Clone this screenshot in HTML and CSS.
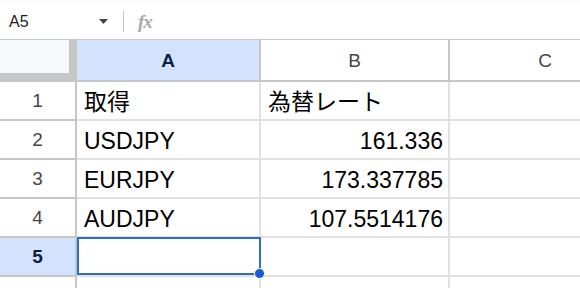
FILE: index.html
```html
<!DOCTYPE html>
<html lang="ja">
<head>
<meta charset="utf-8">
<link rel="stylesheet" href="styles.css">
</head>
<body>
<div class="app">
  <div class="topstrip"></div>
  <div class="formulabar">
    <div class="namebox">
      <span class="nametext">A5</span>
      <svg class="caret" width="9" height="5" viewBox="0 0 9 5"><path d="M0 0 H9 L4.5 5 Z" fill="#444746"/></svg>
    </div>
    <div class="sep"></div>
    <span class="fx">fx</span>
  </div>
  <div class="grid">
    <div class="corner"></div>
    <div class="colhdr active">A</div>
    <div class="colhdr">B</div>
    <div class="colhdr last">C</div>

    <div class="rowhdr">1</div>
    <div class="cell">取得</div>
    <div class="cell">為替レート</div>
    <div class="cell last"></div>

    <div class="rowhdr">2</div>
    <div class="cell">USDJPY</div>
    <div class="cell num">161.336</div>
    <div class="cell last"></div>

    <div class="rowhdr">3</div>
    <div class="cell">EURJPY</div>
    <div class="cell num">173.337785</div>
    <div class="cell last"></div>

    <div class="rowhdr">4</div>
    <div class="cell">AUDJPY</div>
    <div class="cell num">107.5514176</div>
    <div class="cell last"></div>

    <div class="rowhdr active">5</div>
    <div class="cell selected"><div class="selbox"></div><div class="handle"></div></div>
    <div class="cell"></div>
    <div class="cell last"></div>

    <div class="rowhdr">6</div>
    <div class="cell"></div>
    <div class="cell"></div>
    <div class="cell last"></div>
  </div>
</div>
</body>
</html>
```

FILE: styles.css
```css
html, body {
  margin: 0;
  padding: 0;
  background: #ffffff;
  overflow: hidden;
}
.app {
  width: 580px;
  height: 288px;
  overflow: hidden;
  font-family: "Liberation Sans", Arial, "Noto Sans CJK JP", sans-serif;
}
.topstrip {
  height: 4px;
  background: #f9fbfd;
}
.formulabar {
  height: 35px;
  display: flex;
  align-items: center;
  background: #ffffff;
  border-bottom: 1px solid #c7c7c7;
}
.namebox {
  width: 112px;
  display: flex;
  align-items: center;
  justify-content: space-between;
  padding-left: 9px;
  box-sizing: border-box;
  padding-right: 4px;
}
.nametext {
  font-family: "Liberation Sans", Arial, sans-serif;
  font-size: 16px;
  color: #1f1f1f;
}
.caret {
  display: block;
}
.sep {
  width: 1px;
  height: 21px;
  background: #c7c7c7;
  margin-left: 11px;
}
.fx {
  margin-left: 14px;
  font-family: "Liberation Serif", serif;
  font-style: italic;
  font-weight: bold;
  font-size: 19px;
  color: #a8a8a8;
  letter-spacing: -1px;
}
.grid {
  display: grid;
  width: 640px;
  grid-template-columns: 77px 184px 189px 190px;
  grid-template-rows: 42px repeat(6, 39px);
}
.corner {
  background: #f8f9fa;
  box-sizing: border-box;
  border-right: 8px solid #c4c7c5;
  border-bottom: 9px solid #c4c7c5;
}
.colhdr {
  box-sizing: border-box;
  background: #ffffff;
  border-right: 2px solid #c4c7c5;
  border-bottom: 2px solid #c4c7c5;
  display: flex;
  align-items: center;
  justify-content: center;
  font-family: "Liberation Sans", Arial, sans-serif;
  font-size: 19px;
  color: #444746;
  padding-top: 2px;
}
.colhdr.active {
  background: #d3e3fd;
  color: #0b1f45;
  font-weight: bold;
}
.colhdr.last, .cell.last {
  border-right: none;
}
.rowhdr {
  box-sizing: border-box;
  background: #ffffff;
  border-right: 2px solid #c4c7c5;
  border-bottom: 2px solid #c4c7c5;
  display: flex;
  align-items: center;
  justify-content: center;
  font-family: "Liberation Sans", Arial, sans-serif;
  font-size: 19px;
  color: #444746;
}
.rowhdr.active {
  background: #d3e3fd;
  color: #0b1f45;
  font-weight: bold;
}
.cell {
  box-sizing: border-box;
  border-right: 2px solid #e1e1e1;
  border-bottom: 2px solid #e1e1e1;
  display: flex;
  align-items: flex-end;
  padding: 0 6px 4px 7px;
  font-size: 23px;
  line-height: 26px;
  color: #000000;
  white-space: nowrap;
}
.cell.num {
  justify-content: flex-end;
  padding-right: 5px;
}
.cell.selected {
  position: relative;
}
.selbox {
  position: absolute;
  left: 0;
  top: -1px;
  right: -2px;
  bottom: 0;
  border: 2px solid #2f6dc6;
  box-sizing: border-box;
}
.handle {
  position: absolute;
  right: -6px;
  bottom: -4px;
  width: 9px;
  height: 9px;
  border-radius: 50%;
  background: #1a5ad7;
  border: 1px solid #ffffff;
}
```
